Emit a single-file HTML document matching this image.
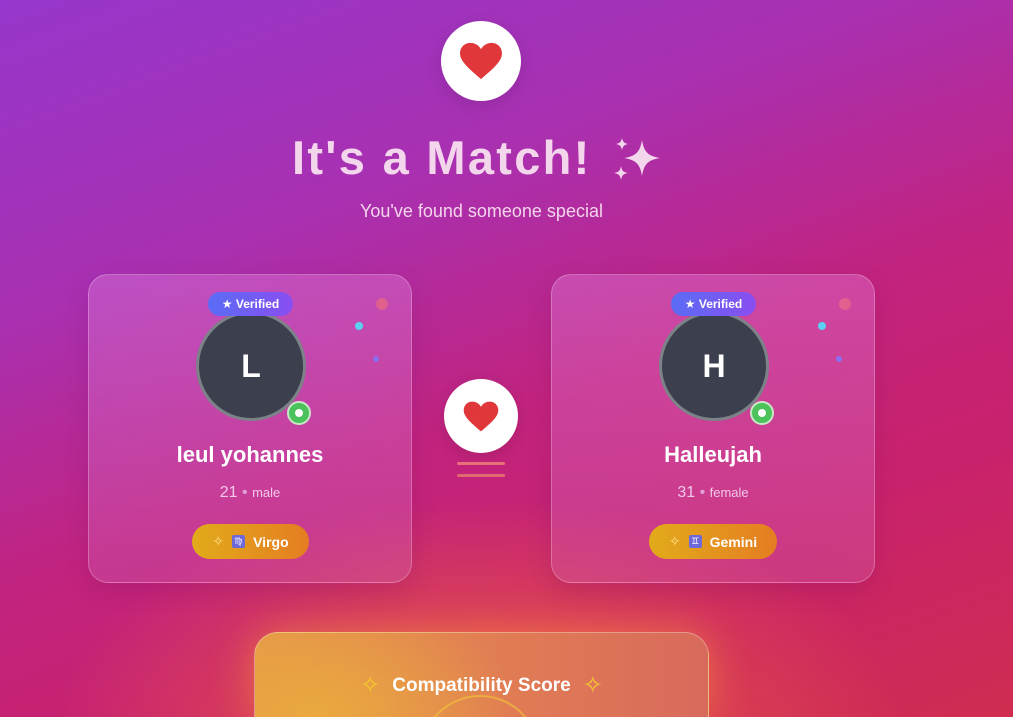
<!DOCTYPE html>
<html style="width:1013px;height:717px;overflow:hidden"><head><meta charset="utf-8"><style>
*{margin:0;padding:0;box-sizing:border-box}
body{width:1013px;height:717px;overflow:hidden;font-family:"Liberation Sans","DejaVu Sans",sans-serif;position:relative;
background:
radial-gradient(ellipse 420px 220px at 480px 720px,#e8643e 0%,rgba(232,90,70,0.6) 40%,rgba(220,60,90,0) 100%),
linear-gradient(160deg,#9636cc 0%,#a930b0 30%,#c2237e 55%,#c9226c 75%,#d02c50 100%);}
.circ{position:absolute;border-radius:50%;background:#fff;display:flex;align-items:center;justify-content:center;box-shadow:0 4px 16px rgba(0,0,0,.12)}
h1{position:absolute;left:292px;top:130px;font-size:47px;font-weight:bold;color:#f3d5ec;letter-spacing:2.3px;white-space:nowrap}
.sub{position:absolute;left:0;width:963px;text-align:center;top:201px;font-size:18px;color:#f3d5ec}
.card{position:absolute;top:274px;width:324px;height:309px;border-radius:20px;background:linear-gradient(180deg,rgba(230,140,230,.35),rgba(210,120,200,.25));border:1px solid rgba(255,255,255,.25);box-shadow:0 8px 24px rgba(80,0,80,.15)}
.av{position:absolute;left:107px;top:36px;width:110px;height:110px;border-radius:50%;background:#3b3f4e;border:3px solid #7c8288;color:#fff;font-size:32px;font-weight:bold;display:flex;align-items:center;justify-content:center}
.ver{position:absolute;left:119px;top:17px;width:85px;height:24px;border-radius:12px;background:linear-gradient(90deg,#5a6cf5,#8a4ef0);color:#fff;font-size:12px;font-weight:bold;display:flex;align-items:center;justify-content:center;gap:4px}
.on{position:absolute;left:198px;top:126px;width:24px;height:24px;border-radius:50%;background:#4cc35a;border:2px solid #c7e8c8;display:flex;align-items:center;justify-content:center}
.on::after{content:"";width:8px;height:8px;border-radius:50%;background:#fff}
.nm{position:absolute;left:0;width:100%;text-align:center;top:167px;font-size:22px;font-weight:bold;color:#fff}
.ag{position:absolute;left:0;width:100%;text-align:center;top:209px;font-size:16px;color:#f0c8ea}
.ag small{font-size:13px}
.zd{position:absolute;top:249px;height:35px;border-radius:18px;background:linear-gradient(90deg,#e2ab1a,#e57d22);color:#fff;font-size:14px;font-weight:bold;display:flex;align-items:center;justify-content:center;gap:8px}
.zb{display:inline-block;width:13px;height:13px;background:#6f68d8;color:#fff;font-size:9px;text-align:center;line-height:13px;border-radius:2px}
.dot{position:absolute;border-radius:50%}
.comp{position:absolute;left:254px;top:632px;width:455px;height:85px;border-radius:24px 24px 0 0;overflow:hidden;background:radial-gradient(ellipse 200px 120px at 60px 80px,#eaa93e,rgba(234,150,70,0) 100%),linear-gradient(90deg,#e5964a,#e07a55 60%,#d86a5c);border:1px solid rgba(255,255,255,.3);border-bottom:none;box-shadow:0 0 40px rgba(255,160,60,.5)}
.ct{position:absolute;left:0;width:100%;top:38px;text-align:center;color:#fff;font-size:19px;font-weight:bold;display:flex;justify-content:center;gap:12px;align-items:center}
</style></head><body>
<div class="circ" style="left:441px;top:21px;width:80px;height:80px">
<svg width="46" height="40" viewBox="0 0 24 21"><path d="M12 20 C5 14 1 10.5 1 6.5 1 3.3 3.4 1 6.5 1 9 1 11 2.5 12 4.3 13 2.5 15 1 17.5 1 20.6 1 23 3.3 23 6.5 23 10.5 19 14 12 20Z" fill="#e0383a"/></svg></div>
<h1>It's a Match!</h1>
<svg style="position:absolute;left:612px;top:136px" width="50" height="48" viewBox="0 0 50 48" fill="#f3d5ec">
<path d="M30 4 C32 16 36 20 48 22 C36 24 32 28 30 40 C28 28 24 24 12 22 C24 20 28 16 30 4Z"/>
<path d="M10 2 C11 6 12 7 16 8 C12 9 11 10 10 14 C9 10 8 9 4 8 C8 7 9 6 10 2Z"/>
<path d="M9 30 C10 35 11 36 16 37 C11 38 10 39 9 44 C8 39 7 38 2 37 C7 36 8 35 9 30Z"/></svg>
<div class="sub">You've found someone special</div>

<div class="card" style="left:88px">
<div class="av">L</div><div class="ver">★ Verified</div><div class="on"></div>
<div class="dot" style="left:287px;top:23px;width:12px;height:12px;background:#e0608e"></div>
<div class="dot" style="left:266px;top:47px;width:8px;height:8px;background:#5cd0f0"></div>
<div class="dot" style="left:284px;top:81px;width:6px;height:6px;background:#8a70f0"></div>
<div class="nm">leul yohannes</div>
<div class="ag">21 <span style="color:#e0a0d8">•</span> <small>male</small></div>
<div class="zd" style="left:103px;width:117px"><span style="color:#ffe08a">✧</span><span class="zb">♍</span>Virgo</div>
</div>

<div class="card" style="left:551px">
<div class="av">H</div><div class="ver">★ Verified</div><div class="on"></div>
<div class="dot" style="left:287px;top:23px;width:12px;height:12px;background:#e0608e"></div>
<div class="dot" style="left:266px;top:47px;width:8px;height:8px;background:#5cd0f0"></div>
<div class="dot" style="left:284px;top:81px;width:6px;height:6px;background:#8a70f0"></div>
<div class="nm">Halleujah</div>
<div class="ag">31 <span style="color:#e0a0d8">•</span> <small>female</small></div>
<div class="zd" style="left:97px;width:128px"><span style="color:#ffe08a">✧</span><span class="zb">♊</span>Gemini</div>
</div>

<div class="circ" style="left:444px;top:379px;width:74px;height:74px">
<svg width="38" height="33" viewBox="0 0 24 21"><path d="M12 20 C5 14 1 10.5 1 6.5 1 3.3 3.4 1 6.5 1 9 1 11 2.5 12 4.3 13 2.5 15 1 17.5 1 20.6 1 23 3.3 23 6.5 23 10.5 19 14 12 20Z" fill="#e0383a"/></svg></div>
<div style="position:absolute;left:457px;top:462px;width:48px;height:3px;border-radius:2px;background:#e8707a"></div>
<div style="position:absolute;left:457px;top:474px;width:48px;height:3px;border-radius:2px;background:#e06a70"></div>

<div class="comp"><div class="ct"><span style="color:#f5c830;font-size:24px">✧</span>Compatibility Score<span style="color:#f5c830;font-size:24px">✧</span></div>
<div style="position:absolute;left:165px;top:62px;width:120px;height:120px;border-radius:50%;border:2px solid rgba(240,190,60,.7)"></div></div>
</body></html>
